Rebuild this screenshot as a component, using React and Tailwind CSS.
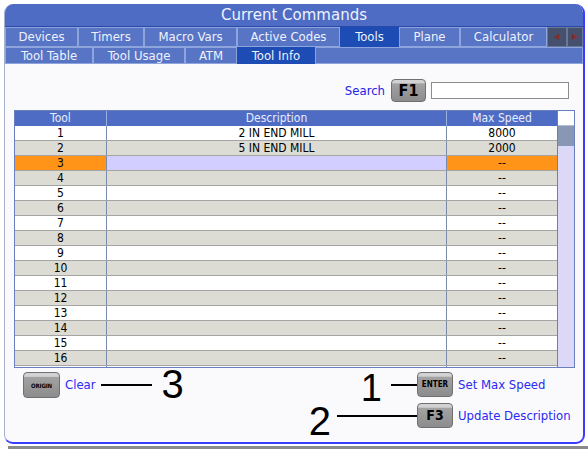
import React from "react";

const TABS_TOP = [
  { label: "Devices", w: "w-[73px]" },
  { label: "Timers", w: "w-[66px]" },
  { label: "Macro Vars", w: "w-[93px]" },
  { label: "Active Codes", w: "w-[103px]" },
  { label: "Tools", w: "w-[59px]", active: true },
  { label: "Plane", w: "w-[61px]" },
  { label: "Calculator", w: "w-[87px]" },
];

const TABS_SUB = [
  { label: "Tool Table", w: "w-[88px]" },
  { label: "Tool Usage", w: "w-[92px]" },
  { label: "ATM", w: "w-[52px]" },
  { label: "Tool Info", w: "w-[78px]", active: true },
];

const TOOLS = [
  { n: 1, desc: "2 IN END MILL", speed: "8000" },
  { n: 2, desc: "5 IN END MILL", speed: "2000" },
  ...Array.from({ length: 15 }, (_, i) => ({ n: i + 3, desc: "", speed: "--" })),
];

function Tab({ label, w, active }) {
  return (
    <div
      className={`${w} h-full flex items-center justify-center border ${
        active
          ? "bg-[#1c4cb4] border-[#1c4cb4]"
          : "bg-[#5874c4] border-[#8ea4dc]"
      } text-[13px] text-[#eef2ff]`}
    >
      {label}
    </div>
  );
}

function Key({ children, className = "" }) {
  return (
    <div
      className={`flex items-center justify-center rounded-[4px] border border-[#707070] bg-[linear-gradient(#d2d2d2_0,#d2d2d2_14%,#a2a2a2_18%,#8c8c8c_100%)] font-bold text-black ${className}`}
    >
      {children}
    </div>
  );
}

function ToolRow({ row, idx }) {
  const selected = row.n === 3;
  const stripe = idx % 2 === 0 ? "bg-white" : "bg-[#dcdcd4]";
  return (
    <div className="flex h-[15px] shrink-0 border-b border-[#a4a4a4] text-[12px] leading-[14px] text-black">
      <div
        className={`w-[92px] border-r border-[#7a8aac] text-center ${
          selected ? "bg-[#ff9418]" : stripe
        }`}
      >
        {row.n}
      </div>
      <div
        className={`w-[340px] border-r border-[#7a8aac] text-center ${
          selected ? "bg-[#d2ceff]" : stripe
        }`}
      >
        {row.desc}
      </div>
      <div className={`w-[110px] text-center ${selected ? "bg-[#ff9418]" : stripe}`}>
        {row.speed}
      </div>
    </div>
  );
}

export default function App() {
  return (
    <div className="w-[588px] h-[458px] bg-white pt-[4px] pl-[4px] font-['DejaVu_Sans_Condensed','DejaVu_Sans',sans-serif] font-stretch-condensed">
      {/* panel */}
      <div className="w-[581px] h-[440px] flex flex-col overflow-hidden rounded-[9px] border-l border-l-[#a8b0d0] border-r-2 border-r-[#3c3cff] border-b-2 border-b-[#3c3cff] bg-[#fafafd]">
        {/* title */}
        <div className="h-[22px] shrink-0 bg-[#4e6cc4] flex items-center justify-center text-[15px] text-[#eef2ff] font-['DejaVu_Sans',sans-serif] font-stretch-normal">
          Current Commands
        </div>
        <div className="h-px shrink-0 bg-[#2a48a8]" />

        {/* tab row 1 */}
        <div className="h-[20px] shrink-0 flex bg-[#5874c4]">
          {TABS_TOP.map((t) => (
            <Tab key={t.label} {...t} />
          ))}
          <div className="w-[20px] h-full bg-[#44506e] border border-[#6a7898] flex items-center justify-center text-[8px] text-[#8a2a2a]">
            ◀
          </div>
          <div className="flex-1 h-full bg-[#44506e] border border-[#6a7898] flex items-center justify-center text-[8px] text-[#8a2a2a]">
            ▶
          </div>
        </div>

        {/* tab row 2 */}
        <div className="h-[17px] shrink-0 flex bg-[#5874c4]">
          {TABS_SUB.map((t) => (
            <Tab key={t.label} {...t} />
          ))}
          <div className="flex-1 h-full border border-[#8ea4dc] bg-[#5874c4]" />
        </div>

        {/* content */}
        <div className="flex-1 flex flex-col pt-[15px]">
          {/* search */}
          <div className="h-[23px] flex items-center justify-end pr-[14px]">
            <span className="text-[13px] text-[#2222e8] mr-[6px]">Search</span>
            <Key className="w-[35px] h-[23px] text-[16px]">F1</Key>
            <div className="ml-[5px] w-[138px] h-[17px] bg-white border border-[#8c8c8c]" />
          </div>

          {/* table */}
          <div className="mt-[8px] ml-[9px] w-[561px] h-[258px] flex overflow-hidden border border-[#6880c0] bg-white">
            <div className="w-[542px] flex flex-col">
              <div className="flex h-[15px] shrink-0 bg-[#4e6cc4] text-[12px] leading-[15px] text-[#e6ecff]">
                <div className="w-[92px] border-r border-[#9ab0e0] text-center">Tool</div>
                <div className="w-[340px] border-r border-[#9ab0e0] text-center">Description</div>
                <div className="w-[110px] text-center">Max Speed</div>
              </div>
              {TOOLS.map((row, i) => (
                <ToolRow key={row.n} row={row} idx={i} />
              ))}
            </div>
            {/* scrollbar */}
            <div className="w-[17px] flex flex-col border-l border-[#6880c0]">
              <div className="h-[15px] shrink-0 bg-white border-b border-[#b4bcd4]" />
              <div className="h-[20px] shrink-0 bg-[#8898b4]" />
              <div className="flex-1 bg-[#dcd8f8]" />
            </div>
          </div>

          {/* bottom actions */}
          <div className="flex mt-[4px]">
            <div className="w-[290px] pl-[18px]">
              <div className="flex items-center h-[26px]">
                <Key className="w-[37px] h-[26px] text-[6px] tracking-tight">ORIGIN</Key>
                <span className="ml-[5px] text-[13px] text-[#2a2af0]">Clear</span>
                <div className="ml-[5px] w-[51px] h-[2px] bg-black" />
                <span className="ml-[10px] font-['Liberation_Sans',Arial,sans-serif] font-stretch-normal text-[40px] leading-[26px] text-black -translate-y-[1px]">
                  3
                </span>
              </div>
            </div>
            <div className="flex flex-col gap-[6px]">
              <div className="flex items-center h-[25px]">
                <div className="w-[122px] flex items-center justify-end">
                  <span className="font-['Liberation_Sans',Arial,sans-serif] font-stretch-normal text-[38px] leading-[25px] text-black translate-y-[4px]">
                    1
                  </span>
                  <div className="ml-[9px] w-[26px] h-[2px] bg-black" />
                </div>
                <Key className="w-[36px] h-[25px] text-[8px]">ENTER</Key>
                <span className="ml-[5px] text-[13px] text-[#2a2af0]">Set Max Speed</span>
              </div>
              <div className="flex items-center h-[25px]">
                <div className="w-[122px] flex items-center justify-end">
                  <span className="font-['Liberation_Sans',Arial,sans-serif] font-stretch-normal text-[40px] leading-[25px] text-black translate-y-[6px]">
                    2
                  </span>
                  <div className="ml-[6px] w-[80px] h-[2px] bg-black" />
                </div>
                <Key className="w-[36px] h-[25px] text-[14px]">F3</Key>
                <span className="ml-[5px] text-[13px] text-[#2a2af0]">Update Description</span>
              </div>
            </div>
          </div>
        </div>
      </div>
      <div className="mt-[2px] ml-[4px] w-[580px] h-[3px] bg-[#8a8a8a]" />
    </div>
  );
}
